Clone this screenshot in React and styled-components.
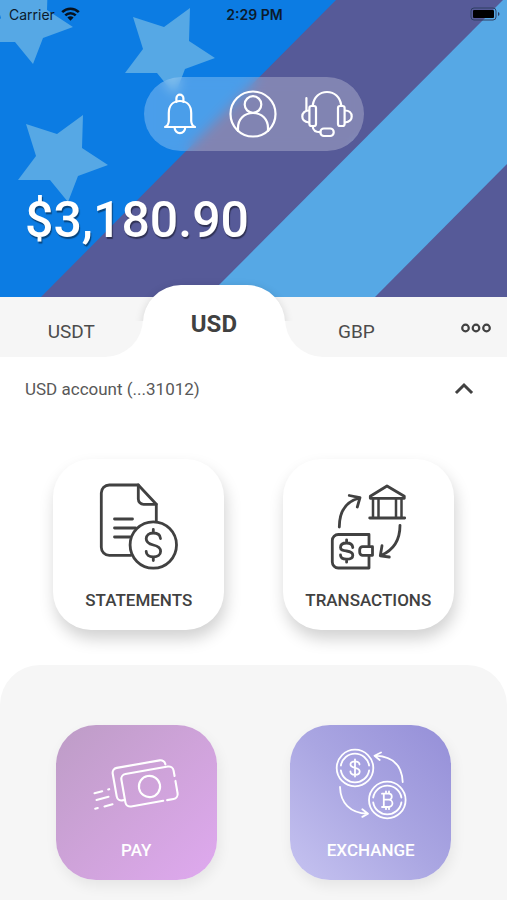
import styled, { createGlobalStyle } from "styled-components";

const GlobalStyle = createGlobalStyle`
    * {
        box-sizing: border-box;
    }
    body {
        margin: 0;
        background: #fff;
        color: #414141;
        font-family: Roboto, "Liberation Sans", sans-serif;
    }
    button {
        border: 0;
        padding: 0;
        background: none;
        color: inherit;
        font-family: inherit;
        cursor: pointer;
    }
    svg {
        display: block;
    }
`;

const Screen = styled.div`
    display: flex;
    flex-direction: column;
    min-height: 100vh;
    overflow: hidden;
`;

const Hero = styled.header`
    position: relative;
    height: 297px;
    background: #0c7ce3;
`;

const FlagArt = styled.svg`
    position: absolute;
    inset: 0;
    width: 100%;
    height: 100%;
`;

const HeroContent = styled.div`
    position: relative;
    display: flex;
    flex-direction: column;
`;

const StatusBar = styled.div`
    display: grid;
    grid-template-columns: 1fr auto 1fr;
    align-items: center;
    height: 28px;
    padding: 0 7px 0 9px;
    color: #0b1a2c;
    font-family: Inter, sans-serif;
    font-size: 14px;
`;

const Carrier = styled.span`
    display: flex;
    align-items: center;
    gap: 6px;
`;

const Clock = styled.time`
    font-weight: 600;
`;

const Battery = styled.svg`
    justify-self: end;
`;

const QuickActions = styled.nav`
    display: grid;
    grid-template-columns: repeat(3, 1fr);
    align-self: center;
    width: 220px;
    height: 74px;
    margin-top: 49px;
    border-radius: 37px;
    background: rgba(255, 255, 255, 0.26);
    backdrop-filter: blur(6px);
`;

const QuickButton = styled.button`
    display: flex;
    align-items: center;
    justify-content: center;
`;

const Balance = styled.h1`
    margin: 40px 0 0 25px;
    color: #fff;
    font-size: 50px;
    font-weight: 500;
    line-height: 58px;
    text-shadow: 1px 2px 1px rgba(0, 0, 0, 0.45);
`;

const Tabs = styled.nav`
    display: grid;
    grid-template-columns: 9fr 9fr 14fr;
    height: 60px;
    background: linear-gradient(#f6f6f6 24px, #fff 24px);
`;

const Tab = styled.button`
    padding-top: 8px;
    font-size: 19px;
    color: #4c4c4c;
`;

const LeftTab = styled(Tab)`
    background: #f6f6f6;
    border-bottom-right-radius: 38px;
`;

const RightTabs = styled.div`
    display: grid;
    grid-template-columns: 9fr 5fr;
    background: #f6f6f6;
    border-bottom-left-radius: 38px;
`;

const ActiveTab = styled.button`
    position: relative;
    margin-top: -12px;
    padding-top: 6px;
    border-radius: 38px 38px 0 0;
    background: #fff;
    font-size: 24px;
    font-weight: 700;

    /* soft edge, only beside the rounded top */
    &::before {
        content: "";
        position: absolute;
        inset: 0;
        border-radius: inherit;
        box-shadow: 0 2px 10px rgba(0, 0, 0, 0.14);
        clip-path: inset(-12px -14px 36px -14px);
    }
`;

const MoreButton = styled.button`
    display: flex;
    align-items: center;
    justify-content: flex-end;
    padding: 2px 16px 0 0;
`;

const AccountRow = styled.button`
    display: flex;
    align-items: center;
    justify-content: space-between;
    height: 64px;
    padding: 0 32px 0 25px;
    color: #585858;
    font-size: 17px;
`;

const Cards = styled.section`
    display: grid;
    grid-template-columns: 1fr 1fr;
    justify-items: center;
    padding: 38px 24px 35px;
`;

const Panel = styled.section`
    display: grid;
    flex: 1;
    grid-template-columns: 1fr 1fr;
    align-items: start;
    justify-items: center;
    padding: 60px 19px 20px;
    border-radius: 40px 40px 0 0;
    background: #f6f6f6;
`;

const Card = styled.button`
    display: flex;
    flex-direction: column;
    align-items: center;
    justify-content: space-between;
    width: 171px;
    height: 171px;
    padding: 22px 0 20px;
    border-radius: 38px;
    background: #fff;
    box-shadow: 2px 9px 16px rgba(0, 0, 0, 0.18);
    font-size: 17px;
    font-weight: 500;
    line-height: 20px;
`;

const ColorCard = styled(Card)`
    width: 161px;
    height: 155px;
    border-radius: 40px;
    background: ${(props) => props.$fill};
    box-shadow: 2px 6px 14px rgba(0, 0, 0, 0.07);
    color: #fff;
`;

const Line = styled.svg.attrs({
    fill: "none",
    stroke: "currentColor",
    strokeLinecap: "round",
    strokeLinejoin: "round",
    "aria-hidden": true,
})`
    overflow: visible;
`;

const STAR = "26,124 57,134 83,115 82,148 108,165 78,176 68,202 50,180 18,180 36,156";

const Flag = () => (
    <FlagArt viewBox="0 0 507 297" preserveAspectRatio="xMidYMid slice" aria-hidden="true">
        <rect width="507" height="297" fill="#0c7ce3" />
        <path d="M336 0H507V297H41Z" fill="#565a98" />
        <path d="M503 0H507V164L375 297H207Z" fill="#56a8e5" />
        <g fill="#56a8e5">
            <polygon points={STAR} />
            <polygon points={STAR} transform="translate(107 -107)" />
            <polygon points={STAR} transform="translate(-35 -138)" />
        </g>
    </FlagArt>
);

const WifiIcon = () => (
    <svg width="19" height="14" viewBox="0 0 19 14" aria-hidden="true">
        <g fill="none" stroke="#07121f" strokeWidth="2.6">
            <path d="M1.2 5.2a11.8 11.8 0 0 1 16.6 0" />
            <path d="M4.3 8.4a7.4 7.4 0 0 1 10.4 0" />
        </g>
        <path d="M6.4 10.6a4.4 4.4 0 0 1 6.2 0L9.5 13.8Z" fill="#07121f" />
    </svg>
);

const BellIcon = () => (
    <Line width="48" height="48" viewBox="0 0 48 48" color="#fff" strokeWidth="2.2">
        <path d="M20.4 12V8.2a3.5 3.5 0 0 1 7 0V12" />
        <path d="M9 37c2.6-1 3.6-3 3.8-6V23c0-7.5 4.4-12 11.2-12s11.2 4.5 11.2 12v8c.2 3 1.2 5 3.8 6Z" />
        <path d="M18.6 37.5a5.2 5.6 0 0 0 10.6 0" />
    </Line>
);

const UserIcon = () => (
    <Line width="48" height="48" viewBox="0 0 48 48" color="#fff" strokeWidth="2.2">
        <circle cx="24" cy="24" r="22.5" />
        <circle cx="24" cy="14.5" r="8.3" />
        <path d="M9 41V38C9 29.500 15 23 24 23S39 29.500 39 38V41" />
    </Line>
);

const HeadsetIcon = () => (
    <Line width="48" height="48" viewBox="0 0 48 48" color="#fff" strokeWidth="2.2">
        <path d="M9.8 16V15C11 7 16.5 2 24 2s13 5 14.2 13v1" />
        <rect x="6.4" y="16" width="6.6" height="20" rx="2" />
        <rect x="35" y="16" width="6.6" height="20" rx="2" />
        <path d="M6 20.5c-4 0-6.7 2.5-6.7 6S2 32 6 32.5M42 20.5c4 0 6.7 2.5 6.7 6S46 32 42 32.5" />
        <path d="M3.4 8v12.5M9.7 36.5c.3 3.8 3 5.7 7.7 5.7" />
        <rect x="17.4" y="38.500" width="13.3" height="7.5" rx="3.5" />
    </Line>
);

const StatementsIcon = () => (
    <Line width="84" height="92" viewBox="0 0 84 92" strokeWidth="2.8">
        <path d="M34 74.3H12.3a8 8 0 0 1-8-8V12a8 8 0 0 1 8-8H41.3L59.3 23.3V40" />
        <path d="M41.3 4V18a5.3 5.3 0 0 0 5.3 5.3H59.3" />
        <path d="M17.5 38H35.5M17.5 47H38.5M17.5 56H33" />
        <circle cx="56.3" cy="64" r="23.2" />
        <path d="M56.3 48.5V52M56.3 76V79.5M63.5 57.5C63.2 54 60.5 52 56.3 52S49.2 54.2 49.2 57.8C49.2 61.5 52 63 56.3 64S63.6 66.5 63.6 70.2 60.6 76 56.3 76 49.2 73.8 49.2 70.5" />
    </Line>
);

const TransactionsIcon = () => (
    <Line width="84" height="92" viewBox="0 0 84 92" strokeWidth="2.8">
        <path d="M44.3 15.3L61 5L78.3 15.3V17.3H44.3ZM43.7 37H78.7" />
        <path d="M47 18V36.5M52.5 18V36.5M70 18V36.5M75.5 18V36.5" strokeWidth="2.5" />
        <path d="M13.3 46C13.3 31 20 20.5 33.3 17M23.3 14.5L34 16.7L31.3 26" />
        <path d="M74 44.3C74 59 68 69 55 74.5M56 64.7L54.3 74.8L63.3 76" />
        <path d="M43 64.5V53.5H12.3a6 6 0 0 0-6 6V81a6 6 0 0 0 6 6H43V75.5" />
        <path d="M46.5 65.7H36.7a3 3 0 0 0-3 3v2.6a3 3 0 0 0 3 3H46.5Z" />
        <path d="M20.6 58.8V62M20.6 78.2V81.2M26.8 66.5C26.5 63.5 24.2 62 20.6 62S14.5 63.7 14.5 66.5 17 69.5 20.6 70 26.8 71.5 26.8 74.2 24.4 78.2 20.6 78.2 14.5 76.5 14.5 74" />
    </Line>
);

const PayIcon = () => (
    <Line width="86" height="74" viewBox="0 0 86 74" strokeWidth="2.1">
        <g transform="translate(56.5 39.5) rotate(-10)">
            <path d="M26.5-6V-11.5a5 5 0 0 0-5-5H-21.5a5 5 0 0 0-5 5V11.5a5 5 0 0 0 5 5H11" />
            <path d="M15 16.5H21.5a5 5 0 0 0 5-5V-1" />
            <path d="M19.5-19a5 5 0 0 0-5-5H-29a5 5 0 0 0-5 5V4a5 5 0 0 0 5 5h2" />
            <circle r="10.6" />
        </g>
        <path d="M1.5 46.3L9.2 44.3M15.2 42.5L16.2 42.2M3.5 53L15.5 49.7M2.2 61.7L4.8 61M11.5 59.5L19.5 57.3" />
    </Line>
);

const ExchangeIcon = () => (
    <Line width="86" height="74" viewBox="0 0 86 74" strokeWidth="1.8">
        <circle cx="27" cy="21" r="18.3" />
        <path d="M12.9 18.5a14.3 14.3 0 0 1 28.2 0M12.9 23.5a14.3 14.3 0 0 0 28.2 0" />
        <circle cx="59.3" cy="53" r="18.3" />
        <path d="M45.2 50.5a14.3 14.3 0 0 1 28.2 0M45.2 55.5a14.3 14.3 0 0 0 28.2 0" />
        <path d="M27 12.5V29.5M31.5 17.5C31.3 15.2 29.6 14.3 27 14.3S22.5 15.5 22.5 17.6 24.5 20.3 27 20.8 31.7 22 31.7 24.5 29.8 27.8 27 27.8 22.4 26.6 22.4 24.3" />
        <path d="M55.8 46.7V60M55.8 46.7H60.8a3 3 0 0 1 0 6H55.8M60.8 52.7a3.6 3.6 0 0 1 0 7.3H55.8M54 46.7H56M54 60H56M58 44.5V46.7M61 44.5V46.7M58 60V62.2M61 60V62.2" />
        <path d="M47.5 8.7C65 9.5 74 18.5 74.7 35M53 5.5L46.5 8.7L51.7 13" />
        <path d="M12 40C12.5 56 22 66 39.5 66.7M34.3 62.3L40 66.7L34.3 69.9" />
    </Line>
);

export default () => {
    return <>
        <GlobalStyle />
        <Screen>
            <Hero>
                <Flag />
                <HeroContent>
                    <StatusBar>
                        <Carrier>Carrier <WifiIcon /></Carrier>
                        <Clock>2:29 PM</Clock>
                        <Battery width="30" height="14" viewBox="0 0 30 14" aria-hidden="true">
                            <rect x="1" y="1" width="25" height="12" rx="3" fill="none" stroke="#2e3f63" />
                            <rect x="3" y="3" width="21" height="8" rx="1" fill="#000" />
                            <path d="M28 5v4q1.5-.5 1.5-2t-1.5-2" fill="#2e3f63" />
                        </Battery>
                    </StatusBar>
                    <QuickActions>
                        <QuickButton aria-label="Notifications"><BellIcon /></QuickButton>
                        <QuickButton aria-label="Profile"><UserIcon /></QuickButton>
                        <QuickButton aria-label="Support"><HeadsetIcon /></QuickButton>
                    </QuickActions>
                    <Balance>$3,180.90</Balance>
                </HeroContent>
            </Hero>
            <Tabs>
                <LeftTab>USDT</LeftTab>
                <ActiveTab aria-current="true">USD</ActiveTab>
                <RightTabs>
                    <Tab>GBP</Tab>
                    <MoreButton aria-label="More currencies">
                        <Line width="30" height="10" viewBox="0 0 30 10" strokeWidth="2.2">
                            <circle cx="4.5" cy="5" r="3.3" />
                            <circle cx="15" cy="5" r="3.3" />
                            <circle cx="25.5" cy="5" r="3.3" />
                        </Line>
                    </MoreButton>
                </RightTabs>
            </Tabs>
            <AccountRow aria-expanded="true">
                USD account (...31012)
                <Line width="22" height="12" viewBox="0 0 22 12" color="#414141" strokeWidth="3">
                    <path d="M4 9L11 2L18 9" strokeLinecap="square" strokeLinejoin="miter" />
                </Line>
            </AccountRow>
            <Cards>
                <Card><StatementsIcon />STATEMENTS</Card>
                <Card><TransactionsIcon />TRANSACTIONS</Card>
            </Cards>
            <Panel>
                <ColorCard $fill="linear-gradient(135deg, #bf9dc8 5%, #cfa3da 50%, #dfa9ef)"><PayIcon />PAY</ColorCard>
                <ColorCard $fill="linear-gradient(45deg, #c3c0ef 5%, #aaa6e2 50%, #958fd8)"><ExchangeIcon />EXCHANGE</ColorCard>
            </Panel>
        </Screen>
    </>
}
